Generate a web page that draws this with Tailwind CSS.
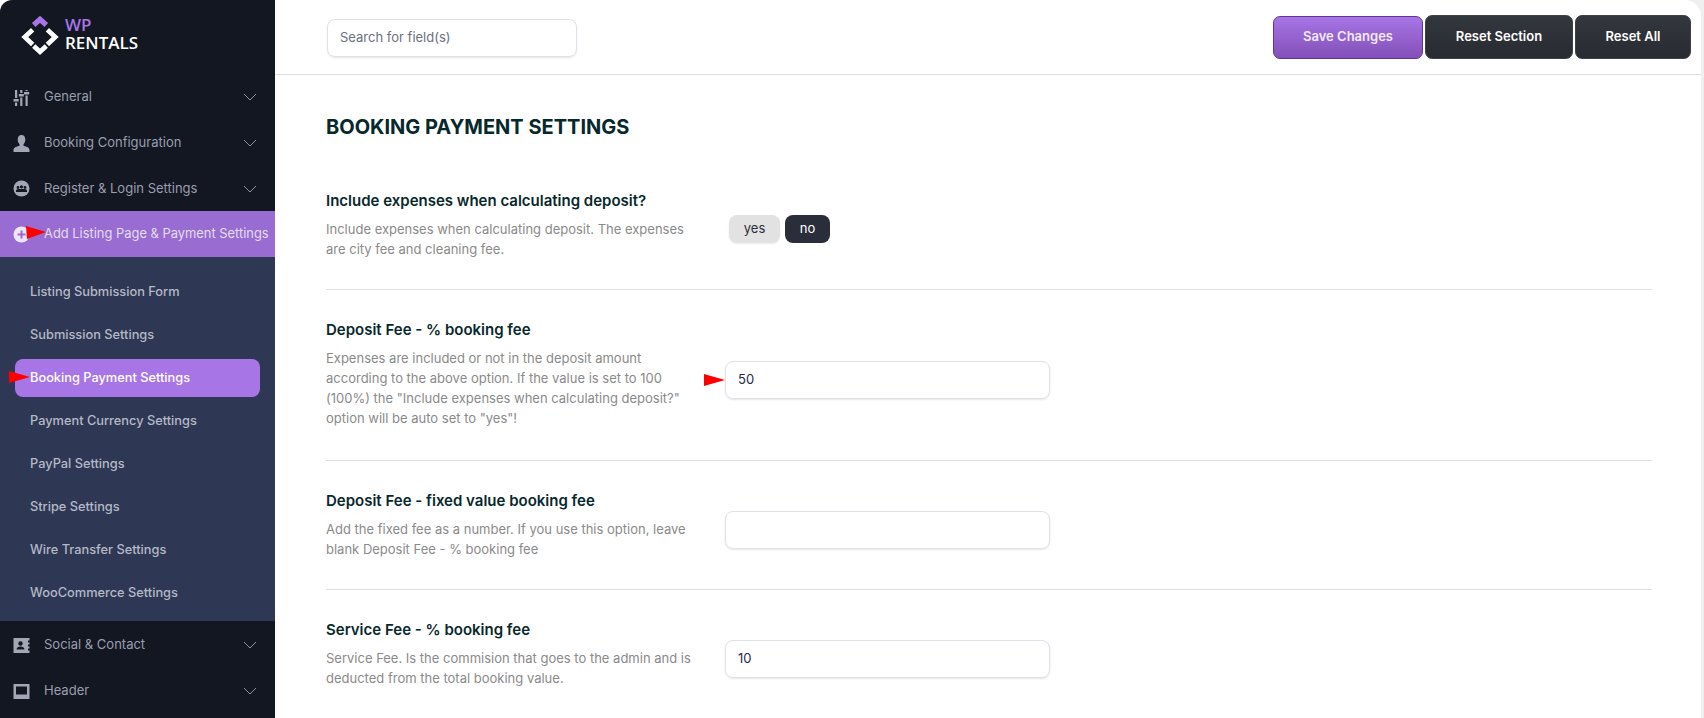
<!DOCTYPE html>
<html lang="en">
<head>
    <meta charset="UTF-8">
    <title>WP Rentals Options</title>
    <script src="https://cdn.jsdelivr.net/npm/@tailwindcss/browser@4"></script>
</head>
<body class="bg-white overflow-hidden font-['Inter',sans-serif]">
    <div class="relative flex h-[718px] w-[1704px] overflow-hidden bg-[linear-gradient(to_right,#fff_275px,#efefef_275px)]">
        <!-- Sidebar -->
        <aside class="w-[275px] shrink-0 bg-[#131722] rounded-tl-[12px] overflow-hidden text-[13px]">
            <div class="h-[74px] pt-[14px] pl-[20px] flex gap-[5px]">
                <svg width="40" height="42" viewBox="0 0 38 40" fill="none">
                    <path d="M13 10.500L19 5L25 10.500" stroke="#a675e6" stroke-width="5"/>
                    <path d="M12 15L4.500 22L12 29M26 15L33.500 22L26 29M13 30.500L19 36L25 30.500" stroke="#fff" stroke-width="4.500"/>
                </svg>
                <div class="text-[17px] leading-[18px] font-semibold pt-[2px] font-['Open_Sans',sans-serif]">
                    <div class="text-[#a675e6]">WP</div>
                    <div class="text-white">RENTALS</div>
                </div>
            </div>
            <nav class="text-[#9a9eae]">
                <a class="h-[46px] flex items-center pl-[13px] pr-[18px]">
                    <svg class="w-[17px] h-[17px] mr-[14px]" viewBox="0 0 17 17" fill="#a3a7b5"><path d="M2 1h2.200v8H2zM7.200 1h2.200v3H7.200zM12.500 1h2.200v1H12.500zM0.500 10h5.200v2.500H0.500zM5.800 5h5v2.500h-5zM11 3h5.200v2.500H11zM2 13.500h2.200V17H2zM7.200 8.500h2.200V17H7.200zM12.500 6.500h2.200V17h-2.200z"/></svg>
                    <span>General</span>
                    <svg class="ml-auto w-[14px] h-[8px]" viewBox="0 0 14 8" fill="none" stroke="#8d91a0" stroke-width="1"><path d="M1 1l6 6 6-6"/></svg>
                </a>
                <a class="h-[46px] flex items-center pl-[13px] pr-[18px]">
                    <svg class="w-[17px] h-[17px] mr-[14px]" viewBox="0 0 17 17" fill="#a3a7b5"><path d="M8.500 0c2.500 0 3.800 1.800 3.800 4.500 0 2-.8 3.700-1.800 4.700v1.500c2 .8 6 1.300 6 4.300v2H.5v-2c0-3 4-3.500 6-4.300V9.200c-1-1-1.800-2.700-1.800-4.700C4.700 1.800 6 0 8.500 0z"/></svg>
                    <span>Booking Configuration</span>
                    <svg class="ml-auto w-[14px] h-[8px]" viewBox="0 0 14 8" fill="none" stroke="#8d91a0" stroke-width="1"><path d="M1 1l6 6 6-6"/></svg>
                </a>
                <a class="h-[45px] flex items-center pl-[13px] pr-[18px]">
                    <svg class="w-[17px] h-[17px] mr-[14px]" viewBox="0 0 17 17"><circle cx="8.500" cy="8.500" r="8" fill="#a3a7b5"/><circle cx="5" cy="7.500" r="1.400" fill="#131722"/><circle cx="12" cy="7.500" r="1.400" fill="#131722"/><circle cx="8.500" cy="6.800" r="1.600" fill="#131722"/><path d="M3 12v-1c0-1.200 1-2 2.200-2h6.600c1.200 0 2.200.8 2.200 2v1z" fill="#131722"/></svg>
                    <span>Register &amp; Login Settings</span>
                    <svg class="ml-auto w-[14px] h-[8px]" viewBox="0 0 14 8" fill="none" stroke="#8d91a0" stroke-width="1"><path d="M1 1l6 6 6-6"/></svg>
                </a>
                <a class="h-[46px] flex items-center pl-[13px] bg-[#986cd0] text-[#e4dcf2]">
                    <svg class="w-[17px] h-[17px] mr-[14px]" viewBox="0 0 17 17"><circle cx="8.500" cy="8.500" r="8" fill="#ece6f5"/><path d="M8.500 4.500v8M4.500 8.500h8" stroke="#986cd0" stroke-width="2"/></svg>
                    <span class="whitespace-nowrap text-[12.900px]">Add Listing Page &amp; Payment Settings</span>
                </a>
                <div class="bg-[#2e3754] h-[364px] pt-[13px] px-[15px] font-medium text-[12.800px] text-[#b4b9c6]">
                    <a class="h-[43px] flex items-center pl-[15px]">Listing Submission Form</a>
                    <a class="h-[43px] flex items-center pl-[15px]">Submission Settings</a>
                    <a class="h-[38px] my-[2.500px] flex items-center pl-[15px] bg-[#a775e6] rounded-[8px] text-white">Booking Payment Settings</a>
                    <a class="h-[43px] flex items-center pl-[15px]">Payment Currency Settings</a>
                    <a class="h-[43px] flex items-center pl-[15px]">PayPal Settings</a>
                    <a class="h-[43px] flex items-center pl-[15px]">Stripe Settings</a>
                    <a class="h-[43px] flex items-center pl-[15px]">Wire Transfer Settings</a>
                    <a class="h-[43px] flex items-center pl-[15px]">WooCommerce Settings</a>
                </div>
                <a class="h-[46px] mt-px flex items-center pl-[13px] pr-[18px]">
                    <svg class="w-[17px] h-[17px] mr-[14px]" viewBox="0 0 17 17"><path d="M0.500 1h16v2.500h-1.500v2h1.500v2h-1.500v2h1.500v2h-1.500v2h1.500V16h-16z" fill="#a3a7b5"/><circle cx="7.500" cy="6.500" r="2.200" fill="#131722"/><path d="M3.500 12.500c0-2 2-3 4-3s4 1 4 3z" fill="#131722"/></svg>
                    <span>Social &amp; Contact</span>
                    <svg class="ml-auto w-[14px] h-[8px]" viewBox="0 0 14 8" fill="none" stroke="#8d91a0" stroke-width="1"><path d="M1 1l6 6 6-6"/></svg>
                </a>
                <a class="h-[46px] flex items-center pl-[13px] pr-[18px]">
                    <svg class="w-[17px] h-[15px] mr-[14px]" viewBox="0 0 17 15"><path d="M.5 0h16v15H.5z" fill="#a3a7b5"/><path d="M3 2.500h11v8H3z" fill="#131722"/></svg>
                    <span>Header</span>
                    <svg class="ml-auto w-[14px] h-[8px]" viewBox="0 0 14 8" fill="none" stroke="#8d91a0" stroke-width="1"><path d="M1 1l6 6 6-6"/></svg>
                </a>
            </nav>
        </aside>

        <!-- Main -->
        <main class="flex-1 min-w-0 mr-[3px] bg-white rounded-tr-[16px]">
            <header class="h-[75px] border-b border-[#dfdfe3] flex items-center justify-between pl-[52px] pr-[10px]">
                <div class="w-[250px] h-[38px] mt-[2px] border border-[#e0e0e8] rounded-[8px] shadow-[0_1px_2px_rgba(0,0,0,0.1)] flex items-center pl-[12px] text-[13px] text-[#6b7080]">Search for field(s)</div>
                <div class="flex items-center gap-[2px] text-[13px] font-semibold text-white">
                    <button class="w-[150px] h-[43px] rounded-[7px] border border-[#5f3596] bg-gradient-to-b from-[#a775e6] to-[#8350b8] text-[#f1e9fb]">Save Changes</button>
                    <button class="w-[148px] h-[44px] rounded-[7px] border border-[#3d4147] bg-gradient-to-b from-[#33373e] to-[#282b31]">Reset Section</button>
                    <button class="w-[116px] h-[44px] rounded-[7px] border border-[#3d4147] bg-gradient-to-b from-[#33373e] to-[#282b31]">Reset All</button>
                </div>
            </header>

            <div class="pl-[51px] pr-[49px]">
                <h1 class="text-[20px] leading-[28px] font-bold text-[#07282c] mt-[38px] mb-[50px]">BOOKING PAYMENT SETTINGS</h1>

                <section class="flex border-b border-[#dfdfe3] h-[99px]">
                    <div class="w-[374px]">
                        <h2 class="text-[15px] leading-[20px] font-semibold text-[#07282c]">Include expenses when calculating deposit?</h2>
                        <p class="text-[13px] leading-[20px] text-[#8a8a8a] mt-[8px]">Include expenses when calculating deposit. The expenses are city fee and cleaning fee.</p>
                    </div>
                    <div class="flex gap-[5px] ml-[29px] mt-[24px] h-[28px] text-[13px]">
                        <span class="w-[51px] rounded-[8px] bg-[#e2e2e2] text-[#2b2f3a] flex items-center justify-center shadow-[0_1px_2px_rgba(0,0,0,0.08)]">yes</span>
                        <span class="w-[45px] rounded-[8px] bg-[#2a2d3a] text-white flex items-center justify-center">no</span>
                    </div>
                </section>

                <section class="flex border-b border-[#dfdfe3] h-[171px] pt-[30px]">
                    <div class="w-[374px]">
                        <h2 class="text-[15px] leading-[20px] font-semibold text-[#07282c]">Deposit Fee - % booking fee</h2>
                        <p class="text-[13px] leading-[20px] text-[#8a8a8a] mt-[8px]">Expenses are included or not in the deposit amount according to the above option. If the value is set to 100 (100%) the "Include expenses when calculating deposit?" option will be auto set to "yes"!</p>
                    </div>
                    <div class="ml-[25px] mt-[41px] w-[325px] h-[38px] border border-[#e0e0e8] rounded-[8px] shadow-[0_1px_2px_rgba(0,0,0,0.1)] flex items-center pl-[12px] text-[13px] text-[#1d2a4a]">50</div>
                </section>

                <section class="flex border-b border-[#dfdfe3] h-[129px] pt-[30px]">
                    <div class="w-[374px]">
                        <h2 class="text-[15px] leading-[20px] font-semibold text-[#07282c]">Deposit Fee - fixed value booking fee</h2>
                        <p class="text-[13px] leading-[20px] text-[#8a8a8a] mt-[8px]">Add the fixed fee as a number. If you use this option, leave blank Deposit Fee - % booking fee</p>
                    </div>
                    <div class="ml-[25px] mt-[20px] w-[325px] h-[38px] border border-[#e0e0e8] rounded-[8px] shadow-[0_1px_2px_rgba(0,0,0,0.1)]"></div>
                </section>

                <section class="flex pt-[30px]">
                    <div class="w-[374px]">
                        <h2 class="text-[15px] leading-[20px] font-semibold text-[#07282c]">Service Fee - % booking fee</h2>
                        <p class="text-[13px] leading-[20px] text-[#8a8a8a] mt-[8px]">Service Fee. Is the commision that goes to the admin and is deducted from the total booking value.</p>
                    </div>
                    <div class="ml-[25px] mt-[20px] w-[325px] h-[38px] border border-[#e0e0e8] rounded-[8px] shadow-[0_1px_2px_rgba(0,0,0,0.1)] flex items-center pl-[12px] text-[13px] text-[#1d2a4a]">10</div>
                </section>
            </div>
        </main>

        <!-- Red annotation arrows -->
        <svg class="absolute left-[26px] top-[226px]" width="20" height="14"><path d="M0 0L20 6L1 13z" fill="#f00"/></svg>
        <svg class="absolute left-[9px] top-[371px]" width="21" height="13"><path d="M0 0L21 6L0 12z" fill="#f00"/></svg>
        <svg class="absolute left-[704px] top-[374px]" width="21" height="13"><path d="M0 0L21 6L0 12z" fill="#f00"/></svg>
    </div>
</body>
</html>
